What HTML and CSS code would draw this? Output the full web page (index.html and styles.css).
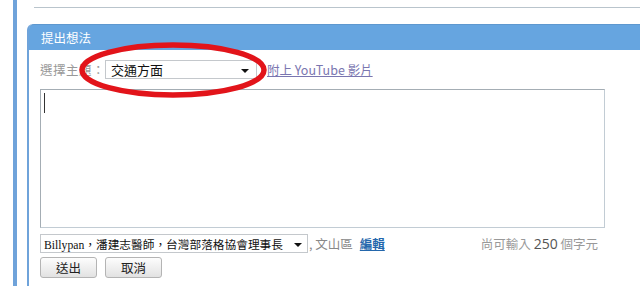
FILE: index.html
```html
<!DOCTYPE html>
<html lang="zh-Hant">
<head>
  <meta charset="UTF-8" />
  <title>提出想法</title>
  <link rel="stylesheet" href="styles.css">
</head>
<body>
  <div class="layout">
    <div class="rail"></div>
    <div class="content">
      <div class="topline"></div>

      <div class="panel">
        <h2 class="panel-head">提出想法</h2>
        <div class="panel-body">
          <div class="topic-row">
            <span class="label">選擇主題：</span>
            <div class="select topic-select">
              <span>交通方面</span>
              <span class="arrow"></span>
            </div>
            <a href="#" class="yt-link">附上 YouTube 影片</a>
            <svg class="circle-mark" width="190" height="56" viewBox="0 0 190 56">
              <ellipse cx="95" cy="28" rx="91" ry="25" fill="none" stroke="#e2141a" stroke-width="5.5" />
            </svg>
          </div>

          <div class="idea-box"><span class="caret"></span></div>

          <div class="author-row">
            <div class="select author-select">
              <span>Billypan，潘建志醫師，台灣部落格協會理事長</span>
              <span class="arrow"></span>
            </div>
            <span class="area">, 文山區</span>
            <a href="#" class="edit-link">編輯</a>
            <span class="counter">尚可輸入 <b>250</b> 個字元</span>
          </div>

          <div class="buttons">
            <button type="button">送出</button>
            <button type="button">取消</button>
          </div>
        </div>
      </div>
    </div>
  </div>
</body>
</html>
```

FILE: styles.css
```css
body {
  margin: 0;
  background: #fff;
  font-family: "Noto Sans CJK TC", "Noto Sans", sans-serif;
  font-size: 13px;
  color: #333;
  overflow: hidden;
}
.layout {
  display: flex;
  height: 286px;
}
.rail {
  margin-left: 13px;
  width: 4px;
  background: #6fa3da;
}
.content {
  flex: 1;
  padding-left: 10px;
}
.topline {
  margin-left: 7px;
  height: 7px;
  border-bottom: 1px solid #b9c4cc;
}
.panel {
  margin-top: 16px;
  border-left: 2px solid #6fa3da;
  border-top-left-radius: 6px;
  height: 262px;
}
.panel-head {
  margin: 0;
  height: 25px;
  line-height: 25px;
  padding-left: 12px;
  background: #66a5e0;
  border-top: 1px solid #5e98cf;
  border-top-left-radius: 5px;
  color: #fff;
  font-size: 12.5px;
  font-weight: normal;
}
.panel-body {
  padding: 10px 0 0 11px;
}
.topic-row {
  position: relative;
  display: flex;
  align-items: center;
  height: 19px;
}
.label {
  color: #999;
  width: 65px;
  font-size: 12.5px;
  letter-spacing: 0.5px;
}
.select {
  display: flex;
  align-items: center;
  justify-content: space-between;
  border: 1px solid #c4c8cc;
  background: #fff;
  color: #111;
  box-sizing: border-box;
}
.topic-select {
  width: 152px;
  height: 19px;
  padding: 0 7px 0 5px;
  font-size: 13px;
}
.arrow {
  flex: none;
  width: 0;
  height: 0;
  border-left: 4px solid transparent;
  border-right: 4px solid transparent;
  border-top: 4px solid #111;
  margin-top: 2px;
}
.yt-link {
  margin-left: 10px;
  color: #7a76b0;
  font-size: 12.5px;
}
.circle-mark {
  position: absolute;
  left: 38px;
  top: -18px;
}
.idea-box {
  margin-top: 10px;
  width: 565px;
  height: 139px;
  box-sizing: border-box;
  border: 1px solid #a4adb4;
  border-right-color: #c2ccd4;
  border-bottom-color: #c2ccd4;
  padding: 3px 0 0 3px;
}
.caret {
  display: block;
  width: 1px;
  height: 20px;
  background: #333;
}
.author-row {
  display: flex;
  align-items: center;
  margin-top: 6px;
  width: 558px;
  height: 19px;
}
.author-select {
  width: 268px;
  height: 19px;
  padding: 0 5px 0 3px;
  font-family: "Liberation Serif", "Noto Sans CJK TC", serif;
  font-size: 11.7px;
}
.author-select span:first-child {
  white-space: nowrap;
  overflow: hidden;
}
.area {
  color: #888;
  font-size: 12.5px;
  margin-left: 1px;
}
.edit-link {
  margin-left: 7px;
  color: #2467ac;
  font-weight: bold;
  font-size: 12.5px;
}
.counter {
  margin-left: auto;
  color: #999;
  font-size: 12.5px;
}
.counter b {
  color: #555;
  font-size: 14px;
  font-weight: normal;
  font-family: "Open Sans", sans-serif;
}
.buttons {
  display: flex;
  gap: 8px;
  margin-top: 4px;
}
.buttons button {
  width: 57px;
  height: 21px;
  padding: 0;
  border: 1px solid #b4b4b4;
  border-radius: 3px;
  background: linear-gradient(#fdfdfd, #e2e2e2);
  font-family: "Noto Sans CJK TC", sans-serif;
  font-size: 12.5px;
  color: #222;
}
```
